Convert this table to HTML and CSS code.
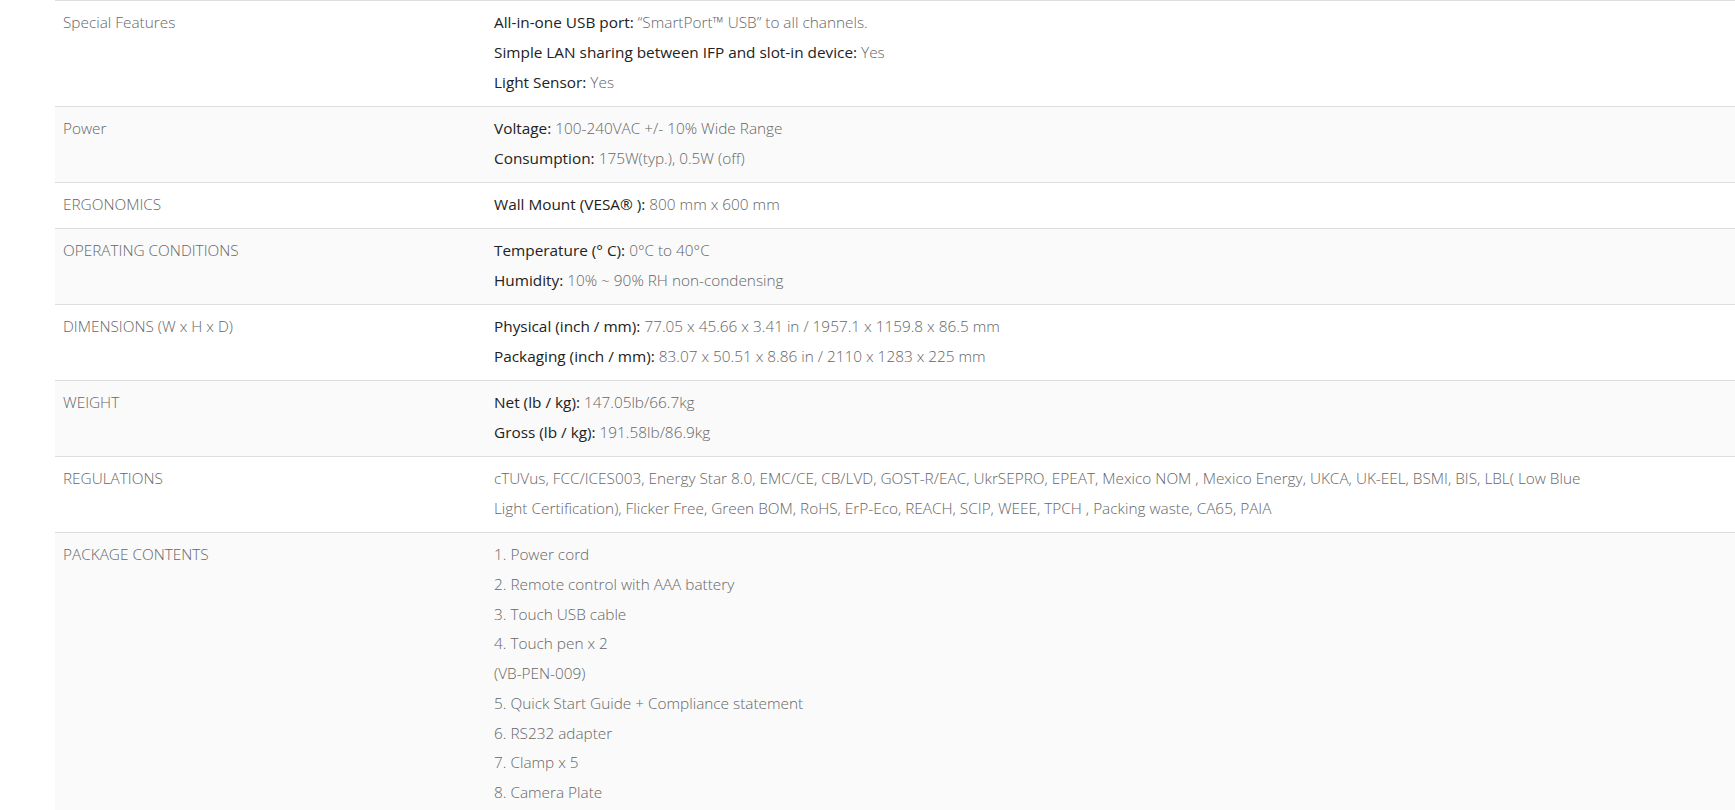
FILE: index.html
```html
<!DOCTYPE html>
<html lang="en">
<head>
<meta charset="utf-8">
<title>Specifications</title>
<link rel="stylesheet" href="styles.css">
</head>
<body>
<div class="page">
<table class="specs">
  <tbody>
    <tr>
      <th>Special Features</th>
      <td>
        <p><b>All-in-one USB port:</b> “SmartPort™ USB” to all channels.</p>
        <p><b>Simple LAN sharing between IFP and slot-in device:</b> Yes</p>
        <p><b>Light Sensor:</b> Yes</p>
      </td>
    </tr>
    <tr>
      <th>Power</th>
      <td>
        <p><b>Voltage:</b> 100-240VAC +/- 10% Wide Range</p>
        <p><b>Consumption:</b> 175W(typ.), 0.5W (off)</p>
      </td>
    </tr>
    <tr>
      <th>ERGONOMICS</th>
      <td>
        <p><b>Wall Mount (VESA® ):</b> 800 mm x 600 mm</p>
      </td>
    </tr>
    <tr>
      <th>OPERATING CONDITIONS</th>
      <td>
        <p><b>Temperature (° C):</b> 0°C to 40°C</p>
        <p><b>Humidity:</b> 10% ~ 90% RH non-condensing</p>
      </td>
    </tr>
    <tr>
      <th>DIMENSIONS (W x H x D)</th>
      <td>
        <p><b>Physical (inch / mm):</b> 77.05 x 45.66 x 3.41 in / 1957.1 x 1159.8 x 86.5 mm</p>
        <p><b>Packaging (inch / mm):</b> 83.07 x 50.51 x 8.86 in / 2110 x 1283 x 225 mm</p>
      </td>
    </tr>
    <tr>
      <th>WEIGHT</th>
      <td>
        <p><b>Net (lb / kg):</b> 147.05lb/66.7kg</p>
        <p><b>Gross (lb / kg):</b> 191.58lb/86.9kg</p>
      </td>
    </tr>
    <tr>
      <th>REGULATIONS</th>
      <td>
        <p class="wrap">cTUVus, FCC/ICES003, Energy Star 8.0, EMC/CE, CB/LVD, GOST-R/EAC, UkrSEPRO, EPEAT, Mexico NOM , Mexico Energy, UKCA, UK-EEL, BSMI, BIS, LBL( Low Blue Light Certification), Flicker Free, Green BOM, RoHS, ErP-Eco, REACH, SCIP, WEEE, TPCH , Packing waste, CA65, PAIA</p>
      </td>
    </tr>
    <tr>
      <th>PACKAGE CONTENTS</th>
      <td>
        <p>1. Power cord</p>
        <p>2. Remote control with AAA battery</p>
        <p>3. Touch USB cable</p>
        <p>4. Touch pen x 2</p>
        <p>(VB-PEN-009)</p>
        <p>5. Quick Start Guide + Compliance statement</p>
        <p>6. RS232 adapter</p>
        <p>7. Clamp x 5</p>
        <p>8. Camera Plate</p>
      </td>
    </tr>
  </tbody>
</table>
</div>
</body>
</html>
```

FILE: styles.css
```css
html, body {
  margin: 0;
  padding: 0;
  background: #ffffff;
}

body {
  font-family: "Open Sans", "Liberation Sans", sans-serif;
  font-size: 15.35px;
  color: #666666;
}

.page {
  padding-left: 55px;
}

.specs {
  width: 100%;
  border-collapse: collapse;
  border-spacing: 0;
}

.specs tr {
  border-top: 1px solid #dddddd;
}

.specs tr:nth-child(even) {
  background: #fafafa;
}

.specs th,
.specs td {
  vertical-align: top;
  text-align: left;
  padding: 7px 8px 8.5px 8px;
  line-height: 29.75px;
}

.specs th {
  width: 415px;
  font-weight: 300;
  color: #666666;
}

.specs td p {
  margin: 0;
  font-weight: 300;
  color: #666666;
}

.specs td b {
  font-weight: 400;
  color: #222222;
}

.specs .wrap {
  max-width: 1110px;
}
```
